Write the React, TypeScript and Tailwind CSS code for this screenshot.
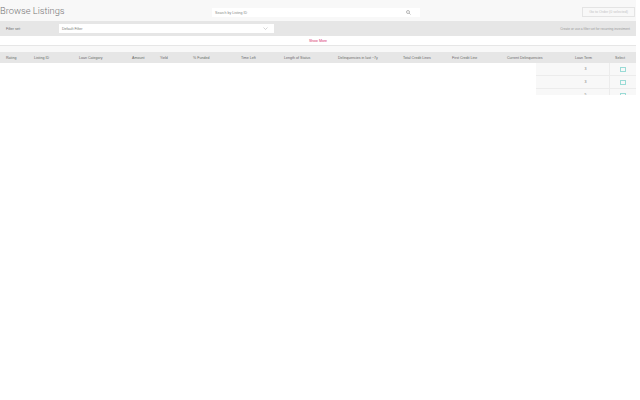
import React from 'react';

const columns = [
  { label: 'Rating', width: 'w-[28px]' },
  { label: 'Listing ID', width: 'w-[45px]' },
  { label: 'Loan Category', width: 'w-[53px]' },
  { label: 'Amount', width: 'w-[28px]' },
  { label: 'Yield', width: 'w-[33px]' },
  { label: '% Funded', width: 'w-[48px]' },
  { label: 'Time Left', width: 'w-[43px]' },
  { label: 'Length of Status', width: 'w-[54px]' },
  { label: 'Delinquencies in last ~7y', width: 'w-[65px]' },
  { label: 'Total Credit Lines', width: 'w-[49px]' },
  { label: 'First Credit Line', width: 'w-[55px]' },
  { label: 'Current Delinquencies', width: 'w-[68px]' },
  { label: 'Loan Term', width: 'w-[40px]' },
  { label: 'Select', width: 'w-[21px]' },
];

const rows = ['3', '3', '5'];

export default function App() {
  return (
    <div className="h-[400px] w-[640px] overflow-hidden bg-white font-['Liberation_Sans',sans-serif] text-[3.6px] leading-none text-[#666]">
      <div className="w-[636px]">
        <div className="flex h-[21px] items-start bg-[#f8f8f8] pt-[7px]">
          <h1 className="w-[212px] font-['Roboto',sans-serif] text-[9.3px] leading-[8px] font-light text-[#777]">Browse Listings</h1>
          <div className="mt-px flex h-[9px] w-[208px] items-center justify-between bg-white pr-[9px] pl-[3px] text-[#888]">
            <span className="pt-[2px]">Search by Listing ID</span>
            <svg width="5" height="5" viewBox="0 0 10 10" fill="none" stroke="#777" strokeWidth="1">
              <circle cx="4" cy="4" r="3" />
              <path d="M6.2 6.2 9 9" />
            </svg>
          </div>
          <button className="mr-px ml-auto flex h-[10px] w-[53px] items-center justify-center border border-[#e4e4e4] pt-[2px] text-[#c4c4c4]">
            Go to Order (0 selected)
          </button>
        </div>

        <div className="flex h-[15px] items-center bg-[#e6e6e6]">
          <span className="w-[59px] pt-[2px] pl-[6px] text-[#666]">Filter set:</span>
          <div className="flex h-[9px] w-[215px] items-center justify-between bg-white pr-[6px] pl-[3px] text-[#777]">
            <span className="pt-[2px]">Default Filter</span>
            <svg width="5" height="3" viewBox="0 0 10 6" fill="none" stroke="#aaa" strokeWidth="1">
              <path d="M1 1l4 4 4-4" />
            </svg>
          </div>
          <span className="ml-auto pt-[2px] pr-[6px] text-[3.25px] text-[#999]">Create or use a filter set for recurring investment</span>
        </div>

        <div className="flex h-[10px] items-center justify-center border-b border-[#e6e6e6] bg-white pt-[2px] text-[#d6336c]">
          Show More
        </div>

        <div className="h-[6px] bg-[#f8f8f8]" />

        <div className="flex h-[11px] items-center bg-[#e6e6e6] pt-[2px] pl-[6px] text-[#666]">
          {columns.map(col => (
            <span key={col.label} className={`${col.width} shrink-0 whitespace-nowrap`}>
              {col.label}
            </span>
          ))}
        </div>

        <div className="flex h-[32px] flex-col items-end overflow-hidden">
          {rows.map((term, i) => (
            <div key={i} className="flex h-[13px] w-[100px] shrink-0 border-b border-[#ececec] bg-[#f8f8f8]">
              <div className="flex flex-1 items-center justify-center pt-[2px] pl-[26px] text-[#777]">{term}</div>
              <div className="flex w-[27px] items-center justify-center border-l border-[#ececec]">
                <div className="h-[5px] w-[6px] border border-[#9adbd6]" />
              </div>
            </div>
          ))}
        </div>
      </div>
    </div>
  );
}
